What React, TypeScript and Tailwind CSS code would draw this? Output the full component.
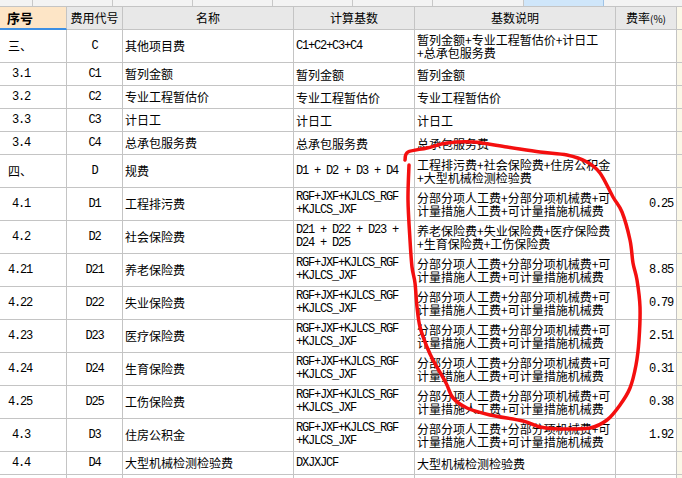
import React from "react";

type Row = {
  no: string;
  noPad?: boolean;
  code: string;
  name: string;
  base: string[];
  baseMono?: boolean;
  desc: string[];
  rate?: string;
  tall?: boolean;
};

const FORMULA = ["RGF+JXF+KJLCS_RGF", "+KJLCS_JXF"];
const LABOR = ["分部分项人工费+分部分项机械费+可", "计量措施人工费+可计量措施机械费"];

const ROWS: Row[] = [
  { no: "三、", code: "C", name: "其他项目费", base: ["C1+C2+C3+C4"], baseMono: true, desc: ["暂列金额+专业工程暂估价+计日工", "+总承包服务费"], tall: true },
  { no: "3.1", noPad: true, code: "C1", name: "暂列金额", base: ["暂列金额"], desc: ["暂列金额"] },
  { no: "3.2", noPad: true, code: "C2", name: "专业工程暂估价", base: ["专业工程暂估价"], desc: ["专业工程暂估价"] },
  { no: "3.3", noPad: true, code: "C3", name: "计日工", base: ["计日工"], desc: ["计日工"] },
  { no: "3.4", noPad: true, code: "C4", name: "总承包服务费", base: ["总承包服务费"], desc: ["总承包服务费"] },
  { no: "四、", code: "D", name: "规费", base: ["D1 + D2 + D3 + D4"], baseMono: true, desc: ["工程排污费+社会保险费+住房公积金", "+大型机械检测检验费"], tall: true },
  { no: "4.1", noPad: true, code: "D1", name: "工程排污费", base: FORMULA, baseMono: true, desc: LABOR, rate: "0.25", tall: true },
  { no: "4.2", noPad: true, code: "D2", name: "社会保险费", base: ["D21 + D22 + D23 +", "D24 + D25"], baseMono: true, desc: ["养老保险费+失业保险费+医疗保险费", "+生育保险费+工伤保险费"], tall: true },
  { no: "4.21", code: "D21", name: "养老保险费", base: FORMULA, baseMono: true, desc: LABOR, rate: "8.85", tall: true },
  { no: "4.22", code: "D22", name: "失业保险费", base: FORMULA, baseMono: true, desc: LABOR, rate: "0.79", tall: true },
  { no: "4.23", code: "D23", name: "医疗保险费", base: FORMULA, baseMono: true, desc: LABOR, rate: "2.51", tall: true },
  { no: "4.24", code: "D24", name: "生育保险费", base: FORMULA, baseMono: true, desc: LABOR, rate: "0.31", tall: true },
  { no: "4.25", code: "D25", name: "工伤保险费", base: FORMULA, baseMono: true, desc: LABOR, rate: "0.38", tall: true },
  { no: "4.3", noPad: true, code: "D3", name: "住房公积金", base: FORMULA, baseMono: true, desc: LABOR, rate: "1.92", tall: true },
  { no: "4.4", noPad: true, code: "D4", name: "大型机械检测检验费", base: ["DXJXJCF"], baseMono: true, desc: ["大型机械检测检验费"] },
];

// hand-drawn red loop, traced over the screenshot
const LOOP: [number, number][] = [
  [405, 160], [408, 152], [427, 148], [447, 143], [473, 142], [507, 147], [540, 152], [567, 155],
  [587, 162], [600, 173], [613, 197], [622, 212], [630, 240], [633, 263], [637, 280], [640, 307],
  [639, 340], [636, 365], [630, 388], [620, 405], [607, 420], [590, 428], [560, 429], [540, 427],
  [523, 421], [490, 415], [467, 408], [453, 398], [446, 383], [433, 360], [427, 347], [420, 327],
  [417, 307], [415, 283], [412, 267], [410, 240], [408, 200], [409, 165],
];

function smooth(pts: [number, number][]) {
  let d = `M${pts[0][0]},${pts[0][1]}`;
  for (let i = 0; i < pts.length - 1; i++) {
    const p0 = pts[i - 1] ?? pts[i];
    const p1 = pts[i];
    const p2 = pts[i + 1];
    const p3 = pts[i + 2] ?? p2;
    const c1x = p1[0] + (p2[0] - p0[0]) / 6;
    const c1y = p1[1] + (p2[1] - p0[1]) / 6;
    const c2x = p2[0] - (p3[0] - p1[0]) / 6;
    const c2y = p2[1] - (p3[1] - p1[1]) / 6;
    d += ` C${c1x},${c1y} ${c2x},${c2y} ${p2[0]},${p2[1]}`;
  }
  return d;
}

const cjk = "font-['Noto_Sans_CJK_SC',sans-serif]";
const mono = "font-['Liberation_Mono',monospace] text-[12px] tracking-[-1.2px]";

function Lines({ lines, isMono }: { lines: string[]; isMono?: boolean }) {
  return (
    <div className={`${isMono ? mono : `${cjk} text-[12px]`} leading-[13px] whitespace-nowrap`}>
      {lines.map((l, i) => (
        <div key={i} className="whitespace-pre">{l}</div>
      ))}
    </div>
  );
}

export default function App() {
  return (
    <div className={`relative w-[682px] h-[478px] overflow-hidden bg-white text-black ${cjk}`}>
      {/* column strip from the sheet above */}
      <div className="flex h-[7px] bg-[#f3f3f3] border-b border-[#c4c4c4]">
        <div className="w-[33px] border-r border-[#c8c8c8]" />
        <div className="w-[80px] border-r border-[#c8c8c8]" />
        <div className="w-[80px] border-r border-[#c8c8c8]" />
        <div className="w-[80px] border-r border-[#c8c8c8]" />
        <div className="w-[80px] border-r border-[#c8c8c8]" />
        <div className="w-[80px] border-r border-[#c8c8c8]" />
        <div className="w-[91px] border-r border-[#c8c8c8]" />
        <div className="w-[80px] border-r border-[#9fc3e6] bg-[#cfe6fa]" />
        <div className="flex-1" />
      </div>

      <div className="grid grid-cols-[67px_56px_171px_121px_201px_61px_5px]">
        {/* header */}
        <div className="h-[23px] flex items-center pl-[7px] bg-[#fde5c6] border-r border-[#c4c4c4] border-b-2 border-b-[#3d8fe3] text-[13px] font-bold">序号</div>
        <div className="h-[23px] flex items-center justify-center bg-[#e8e8e8] border-r border-b border-[#c4c4c4] text-[12px]">费用代号</div>
        <div className="h-[23px] flex items-center justify-center bg-[#e8e8e8] border-r border-b border-[#c4c4c4] text-[12px]">名称</div>
        <div className="h-[23px] flex items-center justify-center bg-[#e8e8e8] border-r border-b border-[#c4c4c4] text-[12px]">计算基数</div>
        <div className="h-[23px] flex items-center justify-center bg-[#e8e8e8] border-r border-b border-[#c4c4c4] text-[12px]">基数说明</div>
        <div className="h-[23px] flex items-center justify-center bg-[#e8e8e8] border-r border-b border-[#c4c4c4] text-[12px]">
          费率<span className="text-[10px]">(%)</span>
        </div>
        <div className="h-[23px] bg-[#fbf8e8] border-b border-[#c4c4c4]" />

        {ROWS.map((r) => {
          const h = r.tall ? "h-[33px]" : "h-[23px]";
          const cell = `${h} flex items-center border-r border-b border-[#c4c4c4]`;
          return (
            <React.Fragment key={r.no}>
              <div className={`${cell} ${r.noPad ? "pl-[12px]" : "pl-[8px]"}`}>
                {/[0-9]/.test(r.no) ? <span className={mono}>{r.no}</span> : <span className="text-[12px]">{r.no}</span>}
              </div>
              <div className={`${cell} justify-center`}>
                <span className={mono}>{r.code}</span>
              </div>
              <div className={`${cell} pl-[2px] text-[12px] whitespace-nowrap`}>{r.name}</div>
              <div className={`${cell} pl-[2px]`}>
                <Lines lines={r.base} isMono={r.baseMono} />
              </div>
              <div className={`${cell} pl-[2px]`}>
                <Lines lines={r.desc} />
              </div>
              <div className={`${cell} justify-end pr-[3px]`}>
                <span className={mono}>{r.rate ?? ""}</span>
              </div>
              <div className={`${h} bg-[#fbf8e8] border-b border-[#c4c4c4]`} />
            </React.Fragment>
          );
        })}

        <div className="h-[23px] border-r border-[#c4c4c4]" />
        <div className="h-[23px] border-r border-[#c4c4c4]" />
        <div className="h-[23px] border-r border-[#c4c4c4]" />
        <div className="h-[23px] border-r border-[#c4c4c4]" />
        <div className="h-[23px] border-r border-[#c4c4c4]" />
        <div className="h-[23px] border-r border-[#c4c4c4]" />
        <div className="h-[23px] bg-[#fbf8e8]" />
      </div>

      <svg className="absolute left-0 top-0 pointer-events-none" width="682" height="478">
        <path d={smooth(LOOP)} fill="none" stroke="#f40f0f" strokeWidth="3.5" strokeLinecap="round" strokeLinejoin="round" />
      </svg>
    </div>
  );
}
